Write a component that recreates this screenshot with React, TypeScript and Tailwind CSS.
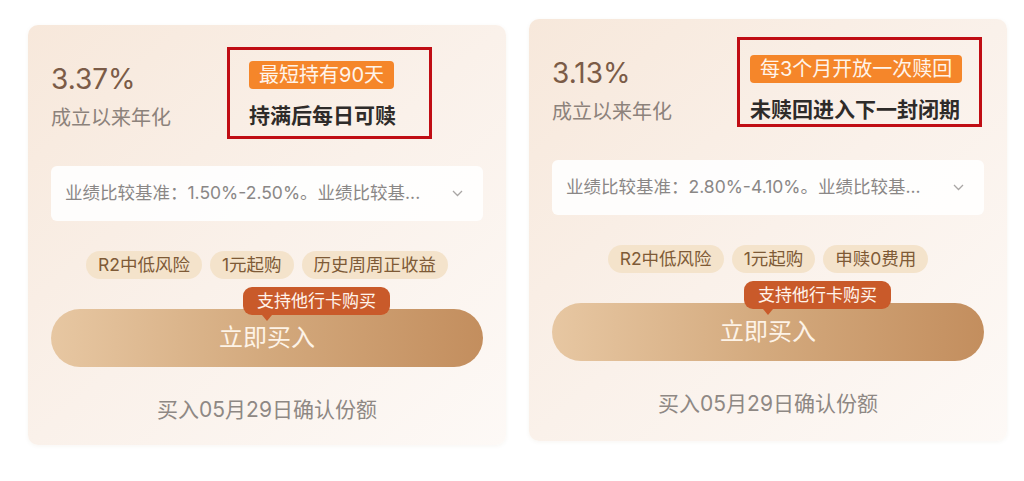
import React from "react";

type Product = {
  rate: string;
  badge: string;
  note: string;
  benchmark: string;
  tags: string[];
  cardClass: string;
  markClass: string;
};

const products: Product[] = [
  {
    rate: "3.37%",
    badge: "最短持有90天",
    note: "持满后每日可赎",
    benchmark: "业绩比较基准：1.50%-2.50%。业绩比较基...",
    tags: ["R2中低风险", "1元起购", "历史周周正收益"],
    cardClass: "mt-[6px] h-[420px]",
    markClass: "left-[199px] top-[22px] w-[205px] h-[92px]",
  },
  {
    rate: "3.13%",
    badge: "每3个月开放一次赎回",
    note: "未赎回进入下一封闭期",
    benchmark: "业绩比较基准：2.80%-4.10%。业绩比较基...",
    tags: ["R2中低风险", "1元起购", "申赎0费用"],
    cardClass: "h-[422px]",
    markClass: "left-[208px] top-[18px] w-[245px] h-[90px]",
  },
];

const FONT = "font-['Inter','Noto_Sans_CJK_SC',sans-serif]";

const ProductCard = ({ p }: { p: Product }) => {
  return (
    <div
      className={`relative w-[478px] shrink-0 rounded-[10px] bg-linear-to-br from-[#f7e8db] via-[#faf1ea] to-[#fdf9f6] px-[23px] pt-[36px] shadow-[0_1px_4px_rgba(120,80,40,0.06)] ${p.cardClass}`}
    >
      {/* rate + holding rule */}
      <div className="flex">
        <div className="w-[198px]">
          <div className="mt-[4px] text-[28px] leading-[28px] text-[#7b5b47]">{p.rate}</div>
          <div className="mt-[13px] text-[20px] leading-[24px] text-[#8c827b]">成立以来年化</div>
        </div>
        <div className="flex flex-col items-start">
          <span className="h-[28px] rounded-[4px] bg-[#f5862a] px-[10px] text-[20px] leading-[28px] text-[#fff4ea]">
            {p.badge}
          </span>
          <span className="mt-[15px] text-[21px] font-semibold leading-[24px] text-[#2e2b29]">
            {p.note}
          </span>
        </div>
      </div>

      {/* annotation box */}
      <div className={`absolute border-[3px] border-[#c00d14] ${p.markClass}`}></div>

      {/* benchmark */}
      <div className="mt-[36px] flex h-[55px] items-center justify-between rounded-[6px] bg-white/90 pl-[14px] pr-[20px]">
        <span className="text-[17.5px] text-[#8a8786]">{p.benchmark}</span>
        <svg width="11" height="7" viewBox="0 0 11 7" fill="none">
          <path d="M1 1l4.5 4.5L10 1" stroke="#a9a6a4" strokeWidth="1.3" />
        </svg>
      </div>

      {/* tags */}
      <div className="mt-[30px] flex justify-center gap-[8px]">
        {p.tags.map((t) => (
          <span
            key={t}
            className="h-[28px] rounded-full bg-[#f4e3cb] px-[12px] text-[17.5px] leading-[28px] text-[#7e5a36]"
          >
            {t}
          </span>
        ))}
      </div>

      {/* buy button */}
      <div className="relative mt-[30px]">
        <button className="flex h-[58px] w-full items-center justify-center rounded-full bg-linear-to-r from-[#e7c7a2] via-[#d3a97d] to-[#c38e5e] text-[24px] text-[#fdf3e7]">
          立即买入
        </button>
        <div className="absolute left-[calc(50%-24px)] top-[-22px] z-10">
          <div className="h-[28px] rounded-[9px] bg-[#c95a2a] px-[14px] text-[17px] leading-[28px] text-[#fff3ea]">
            支持他行卡购买
          </div>
          <div className="ml-[19px] h-0 w-0 border-x-[5px] border-t-[6px] border-x-transparent border-t-[#c95a2a]"></div>
        </div>
      </div>

      <div className="mt-[31px] text-center text-[21px] leading-[24px] text-[#8e8884]">
        买入05月29日确认份额
      </div>
    </div>
  );
};

const App = () => {
  return (
    <div className={`flex min-h-[481px] w-[1024px] items-start gap-[23px] bg-white pl-[28px] pt-[19px] ${FONT}`}>
      {products.map((p) => (
        <ProductCard key={p.rate} p={p} />
      ))}
    </div>
  );
};

export default App;
